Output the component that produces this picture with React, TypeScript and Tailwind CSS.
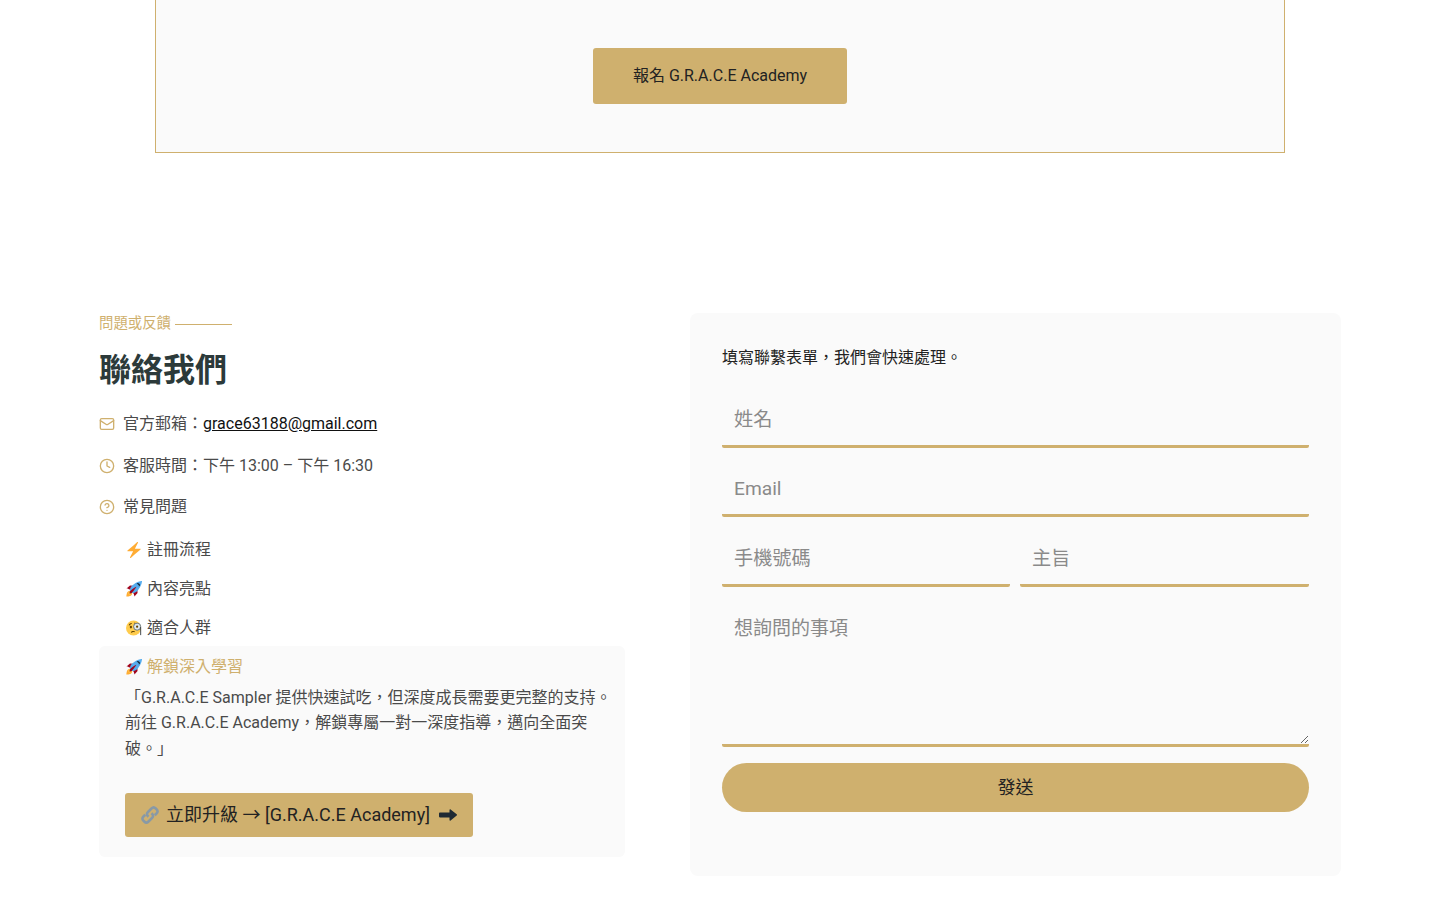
import { Mail, Clock, CircleHelp } from "lucide-react";

const Bolt = () => (
  <svg viewBox="0 0 36 36" className="w-4 h-4 shrink-0 ml-px -mt-px">
    <path fill="#FFAC33" d="M32.938 15.651C32.792 15.26 32.417 15 32 15H19.925L26.89 1.458c.219-.426.106-.947-.271-1.243C26.437.071 26.218 0 26 0c-.233 0-.466.082-.653.243L18 6.588 3.347 19.243c-.316.273-.43.714-.284 1.105S3.582 21 4 21h12.075L9.11 34.542c-.219.426-.106.947.271 1.243.182.144.401.215.619.215.233 0 .466-.082.653-.243L18 29.412l14.653-12.655c.317-.273.431-.714.285-1.106z" />
  </svg>
);

const Rocket = () => (
  <svg viewBox="0 0 36 36" className="w-4 h-4 shrink-0 ml-px -mt-px">
    <path fill="#A0041E" d="M1 17l8-7 16 1 1 16-7 8s.001-5.999-6-12-12-6-12-6z" />
    <path fill="#FFAC33" d="M.973 35s-.036-7.979 2.985-11S15 21.187 15 21.187 14.999 29 11.999 32c-3 3-11.026 3-11.026 3z" />
    <circle fill="#FFCC4D" cx="8.999" cy="27" r="4" />
    <path fill="#55ACEE" d="M35.999 0s-10 0-22 10c-6 5-6 14-4 16s11 2 16-4c10-12 10-22 10-22z" />
    <path d="M26.999 5c-1.623 0-3.013.971-3.641 2.36.502-.227 1.055-.36 1.641-.36 2.209 0 4 1.791 4 4 0 .586-.133 1.139-.359 1.64 1.389-.627 2.359-2.017 2.359-3.64 0-2.209-1.791-4-4-4z" fill="#000" />
    <path fill="#A0041E" d="M8 28s0-4 1-5 13.001-10.999 14-10-9.001 13-10.001 14S8 28 8 28z" />
  </svg>
);

const Monocle = () => (
  <svg viewBox="0 0 36 36" className="w-4 h-4 shrink-0 ml-px -mt-px">
    <circle fill="#FFCC4D" cx="17" cy="18" r="17" />
    <path fill="#664500" d="M6 12c1-3 4-5 7-5v2c-2 0-4 1.500-5 3.500zM18 6c3 0 5 .5 7 2l-1 1.500c-2-1-4-1.500-6-1.500z" />
    <ellipse fill="#664500" cx="11" cy="16" rx="2.500" ry="3" />
    <path fill="#664500" d="M11 28c1-3 6-4 9-2l-.6 1.400c-2.500-1-5.400-.6-7 1.200z" />
    <circle fill="#E1E8ED" stroke="#66757F" strokeWidth="2.200" cx="25" cy="15" r="8" />
    <circle fill="#664500" cx="25" cy="15" r="2.500" />
    <path stroke="#31373D" strokeWidth="2" fill="none" d="M33 16v18" />
  </svg>
);

const LinkEmoji = () => (
  <svg viewBox="0 0 36 36" className="w-[18px] h-[18px] shrink-0" fill="none" stroke="#8899A6" strokeWidth="5">
    <path d="M15 21.500l-1-1c-2.500-2.500-2.500-6 0-8.500l7-7c2.500-2.500 6-2.500 8.500 0l1.500 1.500c2.500 2.500 2.500 6 0 8.500l-3.500 3.500" />
    <path d="M21 14.500l1 1c2.500 2.500 2.500 6 0 8.500l-7 7c-2.500 2.500-6 2.500-8.500 0L5 29.500c-2.500-2.500-2.500-6 0-8.500l3.500-3.500" />
  </svg>
);

const HeavyArrow = () => (
  <svg viewBox="0 0 18 12" className="w-[18px] h-3 shrink-0 ml-[2px]">
    <path
      fill="#1f2a33"
      d="M.8 3.600h9.700V1c0-.6.6-.9 1.100-.5l6.100 4.800c.4.300.4 1 0 1.300l-6.100 4.900c-.5.400-1.100.1-1.100-.5V8.400H.8c-.4 0-.8-.3-.8-.8V4.400c0-.5.4-.8.8-.8z"
    />
  </svg>
);

const fieldClass =
  "w-full h-[56px] px-3 pt-px bg-transparent border-b-[3px] border-[#cfb06e] rounded-[2px] outline-none text-[19.2px] text-[#333] placeholder:text-[#8a8a8a]";

export default function App() {
  return (
    <div className="min-h-[900px] bg-white text-[#4a4a4a] font-['Roboto','Noto_Sans_CJK_TC',sans-serif]">
      <div className="mx-[155px] border-x border-b border-[#cfb06e] bg-[#fafafa] pt-12 pb-12 flex justify-center">
        <a className="w-[254px] h-14 flex items-center justify-center rounded-[3px] bg-[#cfb06e] text-base text-[#222]">
          報名 G.R.A.C.E Academy
        </a>
      </div>

      <div className="mt-[161px] ml-[99px] w-[1242px] flex justify-between items-start">
        <div className="w-[526px]">
          <div className="h-5 flex items-center gap-1 text-[14.4px] leading-5 text-[#cfb06e]">
            問題或反饋
            <span className="w-[57px] h-px bg-[#cfb06e]" />
          </div>
          <h2 className="mt-[16px] text-[32px] leading-[40px] font-bold text-[#2c3a3a]">聯絡我們</h2>

          <div className="mt-[21px] flex flex-col gap-4 text-base leading-[26px]">
            <div className="flex items-center gap-2">
              <Mail className="w-4 h-4 text-[#cfb06e]" strokeWidth={2} />
              <span>
                官方郵箱：<a className="text-[#111] underline">grace63188@gmail.com</a>
              </span>
            </div>
            <div className="flex items-center gap-2">
              <Clock className="w-4 h-4 text-[#cfb06e]" strokeWidth={2} />
              <span>客服時間：下午 13:00 – 下午 16:30</span>
            </div>
            <div className="flex items-center gap-2 -mt-px">
              <CircleHelp className="w-4 h-4 text-[#cfb06e]" strokeWidth={2} />
              <span>常見問題</span>
            </div>
          </div>

          <div className="mt-[17px] pl-[26px] flex flex-col gap-[13px] text-base leading-[26px]">
            <div className="flex items-center gap-[5px] h-[26px]"><Bolt />註冊流程</div>
            <div className="flex items-center gap-[5px] h-[26px]"><Rocket />內容亮點</div>
            <div className="flex items-center gap-[5px] h-[26px]"><Monocle />適合人群</div>
          </div>

          <div className="mt-[5px] bg-[#fafafa] rounded-md pl-[26px] pr-3 pb-5 text-base leading-[25.6px]">
            <div className="pt-2 h-[34px] flex items-center gap-[5px] text-[#cfb06e]"><Rocket />解鎖深入學習</div>
            <p className="mt-[4.6px]">
              「G.R.A.C.E Sampler 提供快速試吃，但深度成長需要更完整的支持。前往 G.R.A.C.E Academy，解鎖專屬一對一深度指導，邁向全面突破。」
            </p>
            <a className="mt-[31.4px] w-[348px] h-11 flex items-center justify-center gap-[7px] rounded-[3px] bg-[#cfb06e] text-lg text-[#222]">
              <LinkEmoji />
              <span>立即升級 → [G.R.A.C.E Academy]</span>
              <HeavyArrow />
            </a>
          </div>
        </div>

        <div className="w-[651px] h-[563px] -mt-px bg-[#fafafa] rounded-lg px-8 pt-[33px]">
          <p className="text-base leading-[24px] text-[#222]">填寫聯繫表單，我們會快速處理。</p>
          <form className="mt-[22px] w-[587px]">
            <input className={fieldClass} placeholder="姓名" />
            <input className={`${fieldClass} mt-[13px]`} placeholder="Email" />
            <div className="mt-[14px] flex gap-[10px]">
              <input className={`${fieldClass} flex-[0_0_288px]`} placeholder="手機號碼" />
              <input className={`${fieldClass} flex-1`} placeholder="主旨" />
            </div>
            <textarea
              className="block mt-[14px] w-full h-[146px] px-3 py-[14px] bg-transparent border-b-[3px] border-[#cfb06e] rounded-[2px] outline-none text-[19px] leading-[27px] text-[#333] placeholder:text-[#8a8a8a]"
              placeholder="想詢問的事項"
            />
            <button
              type="button"
              className="mt-[16px] w-full h-[49px] rounded-[25px] bg-[#cfb06e] text-lg text-[#222]"
            >
              發送
            </button>
          </form>
        </div>
      </div>
    </div>
  );
}
